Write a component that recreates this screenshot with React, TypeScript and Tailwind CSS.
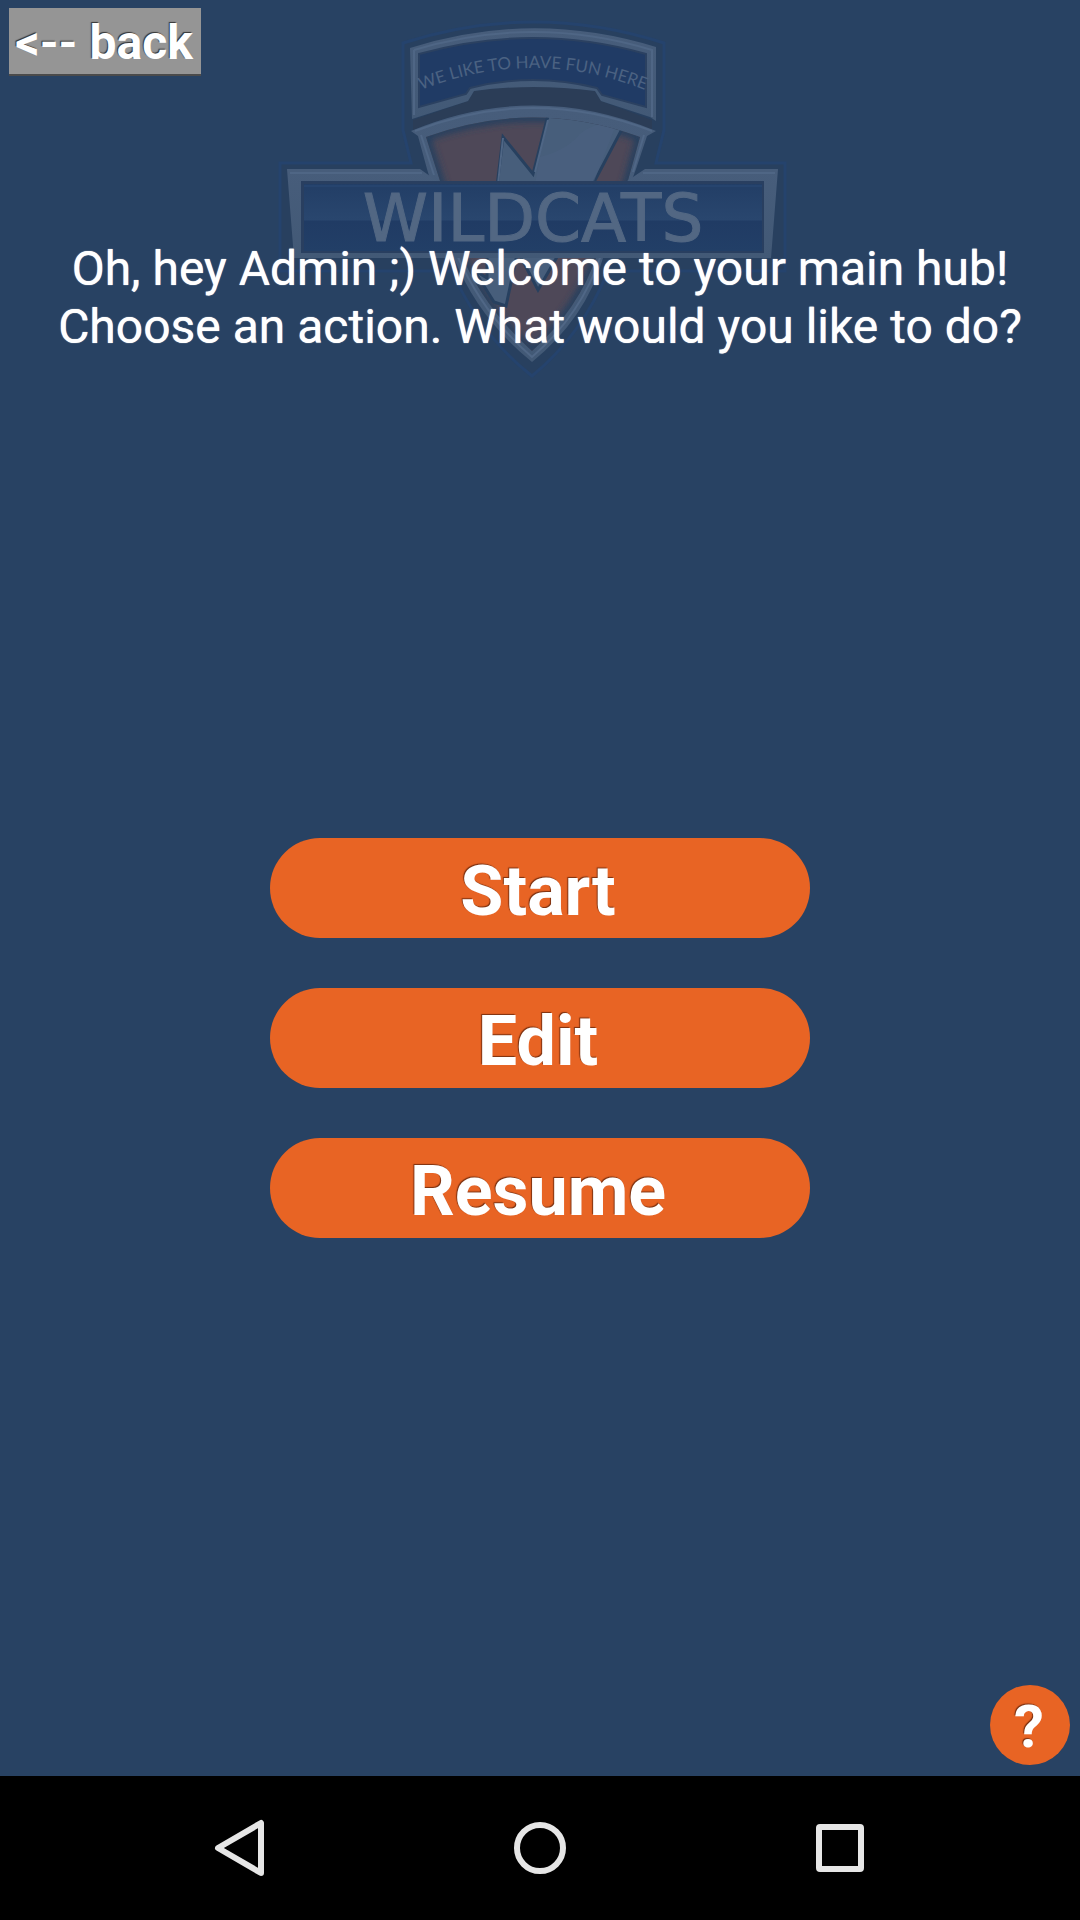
const outline =
  "M403 43 Q533 1 664 43 L664 130 L656 163 L785 163 L785 271 L608 271 Q582 335 532 376 Q480 335 452 271 L280 271 L280 163 L411 163 L403 130 Z";
const field =
  "M426 137 Q533 98 640 137 L627 184 L598 252 Q580 308 532 351 Q484 308 460 252 L441 184 Z";

function Crest() {
  return (
    <svg
      viewBox="270 10 530 370"
      className="absolute left-1/2 top-[10px] -ml-[5px] w-[530px] -translate-x-1/2"
      role="img"
      aria-label="Wildcats crest"
    >
      <defs>
        <linearGradient id="metal" x1="0" y1="0" x2="0" y2="1">
          <stop offset="0" stopColor="#475d7b" />
          <stop offset="1" stopColor="#425976" />
        </linearGradient>
        <linearGradient id="banner" x1="0" y1="0" x2="0" y2="1">
          <stop offset="0" stopColor="#223e66" />
          <stop offset="0.53" stopColor="#29466e" />
          <stop offset="0.56" stopColor="#203b64" />
          <stop offset="1" stopColor="#223f67" />
        </linearGradient>
        <path id="motto" d="M421 90 Q533 46 645 90" />
        <clipPath id="fieldClip">
          <path d={field} />
        </clipPath>
        <filter id="soft" x="-10%" y="-10%" width="120%" height="120%">
          <feGaussianBlur stdDeviation="3" />
        </filter>
      </defs>

      <path d={outline} fill="#28405f" stroke="#25436d" strokeWidth="3" />
      <path
        d="M474 91 Q533 82 595 91 L601 101 L652 120 L652 130 Q533 82 413 130 L413 120 L468 101 Z"
        fill="#2b3d57"
      />

      <path
        d="M411 131 Q533 80 656 131 L647 136 L636 169 L603 258 Q586 318 532 362 Q478 318 454 258 L427 169 L418 136 Z"
        fill="url(#metal)"
      />
      <path d="M415 131 Q533 85 652 131" fill="none" stroke="#506786" strokeWidth="2" />
      <path
        d="M421 135 L434 175 M644 135 L633 172 M457 255 Q484 316 532 357 Q582 314 601 255"
        fill="none"
        stroke="#506786"
        strokeWidth="2"
      />
      <path d={field} fill="#4e4858" />
      <g clipPath="url(#fieldClip)">
        <path d={field} fill="none" stroke="#28405f" strokeWidth="9" filter="url(#soft)" />
        <path
          d="M497 186 L503 137 L533 174 L547 119 L551 112 Q590 114 622 129 L592 186 Z"
          fill="#475e7b"
          stroke="#27405f"
          strokeWidth="3"
        />
        <path d="M540 157 Q567 150 580 134 Q592 123 617 122 L593 184 L535 184 Z" fill="#4b6180" opacity=".6" />
        <path d="M498 184 L503 138 M535 172 L548 120" stroke="#4f6685" strokeWidth="2" />
        <path
          d="M487 250 L518 250 L506 306 L494 302 L474 270 L487 278 Z M517 250 L561 250 L538 290 Z"
          fill="#475e7b"
          stroke="#27405f"
          strokeWidth="3"
        />
      </g>

      <path
        d="M410 48 Q533 9 656 47 L656 121 L650 117 L601 101 L595 91 Q533 83 474 91 L468 101 L412 119 Z"
        fill="url(#metal)"
      />
      <path
        d="M414 50 Q533 14 652 50 L652 117 M414 50 L414 115"
        fill="none"
        stroke="#4f6685"
        strokeWidth="2"
      />
      <path
        d="M419 54 Q533 22 646 54 L646 107 L602 95 L597 88 Q533 72 470 88 L466 94 L419 107 Z"
        fill="#203b65"
        stroke="#2b4161"
        strokeWidth="2"
      />
      <text fill="#4b6282" fontFamily="Lato, sans-serif" fontSize="17">
        <textPath href="#motto" startOffset="50%" textAnchor="middle">
          WE LIKE TO HAVE FUN HERE
        </textPath>
      </text>

      <path d="M287 169 H420 L437 181 H627 L645 169 H778 L771 258 H294 Z" fill="url(#metal)" />
      <path d="M290 173 H422 M643 173 H775" stroke="#4f6685" strokeWidth="2" />
      <rect x="301" y="181" width="463" height="72" fill="#293f60" />
      <rect x="304" y="184" width="458" height="67" fill="url(#banner)" />
      <path d="M304 186 H762" stroke="#2a4b76" strokeWidth="1" />
      <text
        x="533"
        y="241"
        textAnchor="middle"
        fill="#526783"
        stroke="#526783"
        strokeWidth="1"
        fontFamily="DejaVu Sans, sans-serif"
        fontSize="66"
      >
        WILDCATS
      </text>
    </svg>
  );
}

const actions = ["Start", "Edit", "Resume"];

export default function App() {
  return (
    <div className="flex min-h-screen flex-col bg-[#284263] font-[Roboto,sans-serif] text-white">
      <main className="relative flex flex-1 flex-col">
        <Crest />
        <header className="relative px-[9px] pt-2">
          <button className="flex h-[68px] w-[192px] items-center justify-center border-b-2 border-[#4b4b4b] bg-[#959595] pt-1 pr-0.5 text-[48px] leading-none font-bold whitespace-nowrap [text-shadow:-1px_-1px_1px_#333]">
            &lt;-- back
          </button>
        </header>
        <p className="relative mt-[164px] text-center text-[48px] leading-[58px] [text-shadow:0_0_1px_#fff]">
          Oh, hey Admin ;) Welcome to your main hub!
          <br />
          Choose an action. What would you like to do?
        </p>
        <nav className="relative mt-[482px] flex flex-col items-center gap-[50px]">
          {actions.map((label) => (
            <button
              key={label}
              className="h-[100px] w-1/2 rounded-full bg-[#e86424] pt-1.5 pr-1 text-[70px] leading-none font-bold [text-shadow:-1px_-1px_1px_#7a3010]"
            >
              {label}
            </button>
          ))}
        </nav>
        <div className="relative mt-auto flex justify-end px-[10px] pb-[11px]">
          <button
            aria-label="Help"
            className="size-20 rounded-full bg-[#e86424] pt-1 pr-0.5 text-[60px] leading-none font-bold [text-shadow:-1px_-1px_1px_#7a3010]"
          >
            ?
          </button>
        </div>
      </main>
      <footer className="flex h-36 items-center justify-center gap-[228px] bg-black">
        <button aria-label="Back" className="size-[72px]">
          <svg viewBox="0 0 72 72" fill="none" stroke="#e6e6e6" strokeWidth="6" strokeLinejoin="round">
            <path d="M14 36 L57 11 V61 Z" />
          </svg>
        </button>
        <button aria-label="Home" className="size-[72px]">
          <svg viewBox="0 0 72 72" fill="none" stroke="#e6e6e6" strokeWidth="6">
            <circle cx="36" cy="36" r="23" />
          </svg>
        </button>
        <button aria-label="Recent apps" className="size-[72px]">
          <svg viewBox="0 0 72 72" fill="none" stroke="#e6e6e6" strokeWidth="6" strokeLinejoin="round">
            <rect x="15" y="15" width="42" height="42" rx="1" />
          </svg>
        </button>
      </footer>
    </div>
  );
}
